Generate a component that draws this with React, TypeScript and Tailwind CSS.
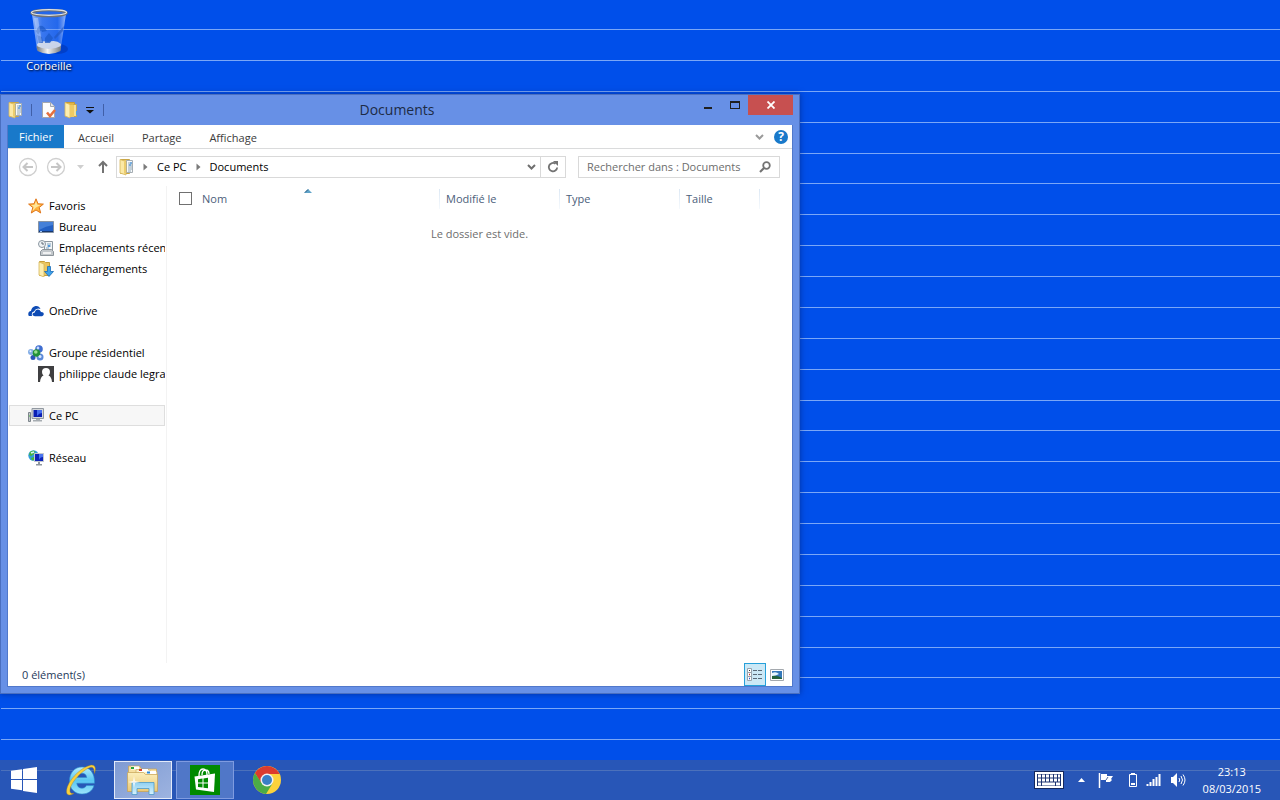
import React from "react";

type IconProps = { className?: string };

const RecycleBin = () => (
  <svg width="44" height="50" viewBox="0 0 44 50" aria-hidden="true">
    <defs>
      <linearGradient id="binGlass" x1="0" x2="1">
        <stop offset="0" stopColor="#c8dcff" stopOpacity=".75" />
        <stop offset=".3" stopColor="#7fa8f5" stopOpacity=".45" />
        <stop offset=".75" stopColor="#5a8df0" stopOpacity=".4" />
        <stop offset="1" stopColor="#d6e4ff" stopOpacity=".7" />
      </linearGradient>
      <linearGradient id="binMetal" x1="0" x2="1">
        <stop offset="0" stopColor="#6f7479" />
        <stop offset=".45" stopColor="#f4f4f4" />
        <stop offset="1" stopColor="#777c80" />
      </linearGradient>
    </defs>
    <ellipse cx="31" cy="41" rx="10" ry="5" fill="#0030a8" opacity=".5" />
    <path d="M5 6 L10 42 Q22 48 33.500 42 L39 6 Z" fill="url(#binGlass)" />
    <path d="M10 36 Q14 32 21 34 Q29 31 34 36 L33 41 Q22 46 11 41 Z" fill="#e6e8ea" opacity=".85" />
    <path d="M9.500 38 Q22 44 34 38 L33.500 43 Q22 49 10.500 43 Z" fill="url(#binMetal)" />
    <path d="M9 23 q3-8 8-4 l3 4 -5 1 -1-2 -3 5zM18 30 l4-5 4 5 -3 5 -5 0zM10 27 l5 2 1 6 -4 0z" fill="#1c59c8" opacity=".75" />
    <path d="M27 29 L37 18 L36 23 L28 31Z" fill="#1f55bd" opacity=".6" />
    <path d="M7 10 L11 35 L15 34 L11 10Z" fill="#fff" opacity=".3" />
    <ellipse cx="22" cy="5" rx="17.500" ry="3" fill="#4a7fe8" fillOpacity=".5" stroke="#6f7276" strokeWidth="2.600" />
    <ellipse cx="22" cy="4.500" rx="17.500" ry="2.800" fill="none" stroke="#dfe2e4" strokeWidth="1.200" />
  </svg>
);

const DocFolder = () => (
  <svg width="16" height="18" viewBox="0 0 16 18" aria-hidden="true" className="shrink-0">
    <path d="M1.500 1.500h9v14h-9z" fill="#eccb68" stroke="#c9a647" />
    <path d="M7.500 2.500h6v12h-6z" fill="#f7f9fa" stroke="#a5adb3" />
    <path d="M9 5h4M9 7h4M9 9h4M9 11h4M9 13h3" stroke="#8fa6b5" />
    <path d="M11 5h2M10 7h2" stroke="#2e8ae0" />
    <path d="M1 1.500l6 2V17l-6-2z" fill="#fbe9a6" stroke="#d5b65b" strokeWidth=".8" />
    <path d="M5 3.500h2V16L5 15.500z" fill="#eccd6e" />
  </svg>
);

const Folder = () => (
  <svg width="14" height="18" viewBox="0 0 14 18" aria-hidden="true">
    <path d="M1.500 1.500h9v14h-9z" fill="#e2b646" stroke="#c49a36" />
    <path d="M9.500 3.500h3v12h-3z" fill="#f6df92" stroke="#c9a03b" strokeWidth=".8" />
    <path d="M12 10h1v4h-1z" fill="#4fa3e0" />
    <path d="M1 1.500l5 2V17l-5-2z" fill="#fdeeb0" stroke="#d8b85a" strokeWidth=".8" />
    <path d="M6 4h4v12H6z" fill="#efca63" />
  </svg>
);

const PropertiesDoc = () => (
  <svg width="14" height="16" viewBox="0 0 14 16" aria-hidden="true">
    <path d="M.5.500h8l4 4v11H.5z" fill="#fdfdfd" stroke="#a3a7ae" />
    <path d="M8.500.500v4h4" fill="#e3e5e8" stroke="#a3a7ae" />
    <path d="M5 10.500l3 3.500 5-6" fill="none" stroke="#e5703f" strokeWidth="2.600" />
  </svg>
);

const Star = () => (
  <svg width="16" height="16" viewBox="0 0 16 16" aria-hidden="true">
    <path d="M8 .8l2 5 5.400.3-4.200 3.400 1.500 5.500L8 12l-4.700 3 1.500-5.500L.6 6.100 6 5.800z" fill="#ffb43c" stroke="#e0761c" strokeLinejoin="round" />
    <path d="M8 3l1.300 3.800 3.500.2L8 9.500 4.500 13l1.200-4L3 7l3.600-.2z" fill="#ffe69a" />
  </svg>
);

const DesktopIcon = () => (
  <svg width="16" height="16" viewBox="0 0 16 16" aria-hidden="true">
    <path d="M.5 2.500h15v11H.5z" fill="#2360c4" stroke="#8793a3" />
    <path d="M1 3h14v3Q8 7 1 11z" fill="#4580d8" />
    <path d="M1 12h14v1H1z" fill="#17386f" />
    <path d="M2 12.500h2" stroke="#9fc6f5" />
  </svg>
);

const RecentIcon = () => (
  <svg width="16" height="16" viewBox="0 0 16 16" aria-hidden="true">
    <path d="M6.500 1.500h8v9h-8z" fill="#f2f5f7" stroke="#8c979f" />
    <path d="M9 4h4M9 6h4M8 8h3" stroke="#7fa3bf" />
    <path d="M10 6h2" stroke="#2f87df" strokeWidth="1.500" />
    <path d="M2.500 11.500l2-2h9l2 2v4h-13z" fill="#c3c8cc" stroke="#8c949a" />
    <path d="M5 13h8" stroke="#fff" strokeWidth="1.500" />
    <circle cx="4" cy="4" r="3.500" fill="#eef2f5" stroke="#8a96a0" />
    <path d="M4 2v2h2" fill="none" stroke="#5f6b76" />
  </svg>
);

const DownloadFolder = () => (
  <svg width="16" height="16" viewBox="0 0 16 16" aria-hidden="true">
    <path d="M1.500.500h5l1 1h4v13h-10z" fill="#ecc65e" stroke="#c79e3a" />
    <path d="M1 1l5 2v13l-5-2z" fill="#fdeeb0" stroke="#d5b65b" strokeWidth=".8" />
    <path d="M9.500 5.500h3v5h3l-4.500 5-4.500-5h3z" fill="#3fa2ea" stroke="#1b6cb8" strokeWidth=".8" />
  </svg>
);

const OneDriveIcon = () => (
  <svg width="16" height="16" viewBox="0 0 16 16" aria-hidden="true">
    <path d="M.5 12.500Q-.5 8.500 3 8Q3.500 4 7.500 3Q11 2.500 12.500 6Q8 4.500 6 8.500Q3 9 4 13H2Q.8 13 .5 12.500z" fill="#0e4bb5" />
    <path d="M6 13Q4.200 12.500 4.500 11Q5 9.500 6.800 9.500Q7.300 6.500 10 6.500Q12.300 6.500 13 9Q15.800 9 15.800 11.300Q15.500 13 14 13.200H7z" fill="#0e4bb5" />
  </svg>
);

const HomeGroupIcon = () => (
  <svg width="16" height="16" viewBox="0 0 16 16" aria-hidden="true">
    <circle cx="11" cy="4" r="3.800" fill="#3f6dd0" />
    <circle cx="3" cy="7" r="3" fill="#84aee6" />
    <circle cx="12" cy="12" r="3.500" fill="#5c8ad8" />
    <circle cx="5" cy="12.500" r="2.500" fill="#2b55b8" />
    <circle cx="8.500" cy="8" r="3.800" fill="#23913a" />
    <circle cx="7.800" cy="7" r="1.800" fill="#9be08f" />
    <circle cx="10" cy="3" r="1.400" fill="#c5dbff" />
    <circle cx="12" cy="11.500" r="1.500" fill="#d8e6ff" />
    <circle cx="2.500" cy="6.300" r="1" fill="#e7f1ff" />
  </svg>
);

const UserIcon = () => (
  <svg width="16" height="16" viewBox="0 0 16 16" aria-hidden="true">
    <path d="M0 0h16v16H0z" fill="#3f3f41" />
    <path d="M8 2q4 0 4 4 0 2-1.500 3.500 3 1 3.500 6.500H2q.5-5.500 3.500-6.500Q4 8 4 6 4 2 8 2z" fill="#fff" />
  </svg>
);

const PcIcon = () => (
  <svg width="16" height="16" viewBox="0 0 16 16" aria-hidden="true">
    <path d="M.5 4.500h2v9h-2z" fill="#c3c8cc" stroke="#7d858b" />
    <path d="M1 8h1" stroke="#4bb840" />
    <path d="M4 .500h11.500v10H4z" fill="#d4d7da" stroke="#9198a0" />
    <path d="M5.500 2H14v7H5.500z" fill="#0b1fb4" />
    <path d="M9 2h5v3Q11 5 9 8z" fill="#466df0" />
    <path d="M8 11h4v1h2v1.500H5V12h3z" fill="#a7adb2" />
  </svg>
);

const NetworkIcon = () => (
  <svg width="16" height="16" viewBox="0 0 16 16" aria-hidden="true">
    <circle cx="5.500" cy="5.500" r="5.200" fill="#2f9dde" />
    <path d="M2 2q3-2 5-1L6 4 3 6 1 5zM3 8l3-1 1 3-3 .5z" fill="#49b53c" />
    <path d="M3 3l3-1" stroke="#d7f3ff" strokeWidth="1.500" />
    <path d="M6.500 3.500h9v8h-9z" fill="#0d24ba" stroke="#c3c8ce" />
    <path d="M11 4h4v3q-3 0-4 3z" fill="#4a74ef" />
    <path d="M10 12h2v2h2v1.500H8V14h2z" fill="#8e969d" />
  </svg>
);

const DetailsView = () => (
  <svg width="16" height="14" viewBox="0 0 16 14" aria-hidden="true">
    <path d="M.5.500h4v4h-4zM.5 4.500h4v4h-4zM.5 8.500h4v4h-4z" fill="#fff" stroke="#98a3ad" />
    <path d="M2 2.500h1" stroke="#333" />
    <path d="M2 6.500h1" stroke="#d3302a" strokeWidth="1.500" />
    <path d="M2 10.500h1" stroke="#2e5ccb" strokeWidth="1.500" />
    <path d="M6 2.500h4M11 2.500h4M6 6.500h4M11 6.500h4M6 10.500h4M11 10.500h4" stroke="#596a78" />
  </svg>
);

const ThumbView = () => (
  <svg width="14" height="12" viewBox="0 0 14 12" aria-hidden="true">
    <path d="M.5.500h13v11H.5z" fill="#fff" stroke="#a4a9ae" />
    <path d="M2 2h10v8H2z" fill="#3578ba" />
    <path d="M2 4q4-2 7 1l-7 3z" fill="#e6f6ff" />
    <path d="M2 7q5-1 10 2v1H2z" fill="#22633b" />
  </svg>
);

const WindowsLogo = () => (
  <svg width="26" height="26" viewBox="0 0 26 26" aria-hidden="true">
    <path d="M0 3.800l11-1.600V12H0zM12 2L26 0v12H12zM0 13h11v10.300L0 21.800zM12 13h14v13l-14-2z" fill="#fff" />
  </svg>
);

const IeLogo = () => (
  <svg width="32" height="32" viewBox="0 0 32 32" aria-hidden="true">
    <defs>
      <linearGradient id="ieBlue" x1="0" y1="0" x2="0" y2="1">
        <stop offset="0" stopColor="#b4ecfd" />
        <stop offset=".5" stopColor="#59c6f3" />
        <stop offset="1" stopColor="#9be4fa" />
      </linearGradient>
    </defs>
    <path
      d="M17 3C9.500 3 4.500 9 4.500 17c0 7.500 5 13 12.500 13 6 0 10.500-3 12-8.500h-7.500c-1 1.800-2.400 2.700-4.500 2.700-3 0-5-2-5.200-5h17.700C30 9.500 25 3 17 3zM12 13.500c.5-2.700 2.300-4.200 5-4.200s4.400 1.500 4.700 4.200z"
      fill="url(#ieBlue)"
      stroke="#2b8fd0"
      strokeWidth=".6"
    />
    <path
      d="M29.500 9.500C31.500 4 30 .500 25.500 1.200 18 2.500 6 13 2.500 22.500 1 27 1 31 4.500 31c1.500 0 3-.7 4.500-1.700-3 .8-4.500-.5-4-3.800C6 18 17.500 6 25 3.500c3-.8 4.500 1 4.500 6z"
      fill="#f9d13d"
      stroke="#a8801c"
      strokeWidth=".4"
    />
  </svg>
);

const ExplorerLogo = () => (
  <svg width="34" height="32" viewBox="0 0 34 32" aria-hidden="true">
    <defs>
      <linearGradient id="tray" x1="0" y1="0" x2="0" y2="1">
        <stop offset="0" stopColor="#8fd0f2" />
        <stop offset="1" stopColor="#d8f2fc" />
      </linearGradient>
      <linearGradient id="folderFront" x1="0" y1="0" x2="0" y2="1">
        <stop offset="0" stopColor="#fbeebb" />
        <stop offset="1" stopColor="#ecc976" />
      </linearGradient>
    </defs>
    <path d="M2.500 2h11l2 3h15v22h-28z" fill="#f6dfa0" stroke="#c6a254" strokeWidth=".7" />
    <path d="M5 2.500h8v3H5z" fill="#fff" />
    <path d="M5 4h3" stroke="#26a33c" strokeWidth="2" />
    <path d="M10 5.500h13l2 2h6v6H10z" fill="#fbeec2" stroke="#cfae63" strokeWidth=".7" />
    <path d="M13 5h9v3h-9z" fill="#fff" />
    <path d="M13 6h3" stroke="#d6402c" strokeWidth="2" />
    <path d="M21 7h9v3h-9z" fill="#fff" />
    <path d="M21 8.500h3" stroke="#2a86d8" strokeWidth="2" />
    <path d="M1.500 8.500h16l2 2h12v17h-30z" fill="url(#folderFront)" stroke="#c6a254" strokeWidth=".7" />
    <path d="M6 18.500h22v12h-5v-6H11v6H6z" fill="url(#tray)" stroke="#4c9bc9" strokeWidth=".8" />
    <path d="M8 12l1 5 5 1-5 1-1 5-1-5-5-1 5-1z" fill="#fff" opacity=".8" />
  </svg>
);

const StoreLogo = () => (
  <svg width="30" height="30" viewBox="0 0 30 30" aria-hidden="true">
    <path d="M0 0h30v30H0z" fill="#008a00" />
    <path d="M9 11Q9 4 13 4t4 6M12 10Q12 5 15.500 5T19 9" fill="none" stroke="#fff" strokeWidth="1.300" />
    <path d="M4.500 11.500L25 8.500l-1 18.500L6 24.500z" fill="#fff" />
    <path d="M8 14.200l4.500-.6v4H8zM13.500 13.500l4.500-.7v4.800h-4.500zM8 18.600h4.500v4l-4.500-.6zM13.500 18.600H18v4.700l-4.500-.6z" fill="#008a00" />
  </svg>
);

const ChromeLogo = () => (
  <svg width="28" height="28" viewBox="0 0 28 28" aria-hidden="true">
    <circle cx="14" cy="14" r="14" fill="#fbd23c" />
    <path d="M1.900 7A14 14 0 0 1 26.100 7L26.500 8H14L8 17z" fill="#dc3b2e" />
    <path d="M1.900 7A14 14 0 0 0 13 28L19.500 17.500 8.500 17z" fill="#4bac47" />
    <circle cx="14" cy="14" r="6.500" fill="#f2f2f2" />
    <circle cx="14" cy="14" r="5" fill="#3a7fc6" />
  </svg>
);

const KeyboardIcon = () => (
  <svg width="30" height="18" viewBox="0 0 30 18" aria-hidden="true">
    <path d="M0 0h30v18H0z" fill="#14275c" />
    <path d="M1 1h28v16H1z" fill="#fff" />
    <path d="M3 3h24v12H3z" fill="#1c3370" />
    <path d="M4 5h22M4 9h22" stroke="#fff" strokeWidth="3" strokeDasharray="3 1" />
    <path d="M4 13h3M8 13h13M22 13h4" stroke="#fff" strokeWidth="3" />
  </svg>
);

const FlagIcon = () => (
  <svg width="16" height="16" viewBox="0 0 16 16" aria-hidden="true">
    <path d="M1.500 1v15" stroke="#fff" strokeWidth="1.500" />
    <path d="M3 2h6v2h6l-2 3 1 1-2 2H8V8H3z" fill="#fff" />
    <path d="M8 8l2-3" stroke="#24407f" strokeWidth=".8" />
  </svg>
);

const BatteryIcon = () => (
  <svg width="10" height="16" viewBox="0 0 10 16" aria-hidden="true">
    <path d="M3 1h4v2H3z" fill="#fff" />
    <path d="M1.500 2.500h7v12h-7z" fill="#2857b7" stroke="#fff" />
    <path d="M3 11h4v2H3z" fill="#fff" />
  </svg>
);

const SignalIcon = () => (
  <svg width="16" height="12" viewBox="0 0 16 12" aria-hidden="true">
    <path d="M1.500 10v2M4.500 8v4M7.500 5v7M10.500 3v9M13.500 0v12" stroke="#fff" strokeWidth="2" />
  </svg>
);

const SpeakerIcon = () => (
  <svg width="16" height="14" viewBox="0 0 16 14" aria-hidden="true">
    <path d="M1 4h2l4-4v14l-4-4H1z" fill="#fff" />
    <path d="M9 5q1.500 2 0 4M11 3q3 4 0 8M13 1.500q4 5.500 0 11" fill="none" stroke="#fff" />
  </svg>
);

const Chevron = ({ className }: IconProps) => (
  <svg width="9" height="6" viewBox="0 0 9 6" aria-hidden="true" className={className}>
    <path d="M1 1l3.500 3.500L8 1" fill="none" stroke="currentColor" strokeWidth="2" />
  </svg>
);

const Crumb = () => (
  <svg width="5" height="8" viewBox="0 0 5 8" aria-hidden="true" className="shrink-0">
    <path d="M.5.500v7L4.500 4z" fill="#7a7a7a" />
  </svg>
);

const CircleArrow = ({ className }: IconProps) => (
  <svg width="20" height="20" viewBox="0 0 20 20" aria-hidden="true" className={className}>
    <circle cx="10" cy="10" r="8.500" fill="none" stroke="#cfcfcf" strokeWidth="1.300" />
    <path d="M15 10H6M9.500 6L5.500 10l4 4" fill="none" stroke="#c6c6c6" strokeWidth="2" />
  </svg>
);

const navGroups = [
  {
    label: "Favoris",
    icon: <Star />,
    items: [
      { label: "Bureau", icon: <DesktopIcon /> },
      { label: "Emplacements récents", icon: <RecentIcon /> },
      { label: "Téléchargements", icon: <DownloadFolder /> },
    ],
  },
  { label: "OneDrive", icon: <OneDriveIcon />, items: [] },
  {
    label: "Groupe résidentiel",
    icon: <HomeGroupIcon />,
    items: [{ label: "philippe claude legrand", icon: <UserIcon /> }],
  },
  { label: "Ce PC", icon: <PcIcon />, items: [], selected: true },
  { label: "Réseau", icon: <NetworkIcon />, items: [] },
];

const columns = [
  { label: "Modifié le", width: "w-[120px]" },
  { label: "Type", width: "w-[120px]" },
  { label: "Taille", width: "w-[80px]" },
];

const Wallpaper = () => (
  <div className="absolute inset-0 flex flex-col justify-between pt-[29px] pb-[29px] pl-px">
    {Array.from({ length: 25 }, (_, i) => (
      <div key={i} className="h-px bg-[#7aa7f7]" />
    ))}
  </div>
);

const TitleBar = () => (
  <header className="flex h-[30px] items-center pl-[7px]">
    <div className="flex items-center">
      <DocFolder />
      <span className="ml-[7px] h-3 w-px bg-[#405fa8]" />
      <button aria-label="Propriétés" className="ml-[10px]">
        <PropertiesDoc />
      </button>
      <button aria-label="Nouveau dossier" className="ml-2">
        <Folder />
      </button>
      <button aria-label="Personnaliser" className="ml-2">
        <svg width="8" height="8" viewBox="0 0 8 8" aria-hidden="true">
          <path d="M0 1h8v1H0zM0 4h8L4 7.500z" fill="#111" />
        </svg>
      </button>
      <span className="ml-[9px] h-3 w-px bg-[#405fa8]" />
    </div>
    <h1 className="flex-1 pr-1 text-center text-[14px] leading-5 text-[#1d2b45]">Documents</h1>
    <div className="flex self-start pr-[6px]">
      <button aria-label="Réduire" className="flex h-5 w-[27px] items-center justify-center">
        <span className="mt-[6px] h-[2px] w-2 bg-[#1f1f1f]" />
      </button>
      <button aria-label="Agrandir" className="flex h-5 w-[27px] items-center justify-center">
        <span className="h-2 w-[10px] border border-t-2 border-[#1f1f1f]" />
      </button>
      <button aria-label="Fermer" className="flex h-5 w-[45px] items-center justify-center bg-[#c75050]">
        <svg width="8" height="8" viewBox="0 0 8 8" aria-hidden="true">
          <path d="M.5.500l7 7M7.500.500l-7 7" stroke="#fff" strokeWidth="1.800" />
        </svg>
      </button>
    </div>
  </header>
);

const Ribbon = () => (
  <nav className="flex h-6 border-b border-[#dadbdc]">
    <button className="w-14 bg-[#1979ca] text-white">Fichier</button>
    {["Accueil", "Partage", "Affichage"].map((tab) => (
      <button key={tab} className="px-[14px] pt-[2px] text-[#3b3b3b]">
        {tab}
      </button>
    ))}
    <div className="ml-auto flex items-center gap-[10px] pr-1">
      <button aria-label="Développer le ruban" className="text-[#9a9a9a]">
        <Chevron />
      </button>
      <button aria-label="Aide" className="flex size-[14px] items-center justify-center rounded-full bg-[#1979ca] text-[12px] font-bold text-white">
        ?
      </button>
    </div>
  </nav>
);

const AddressBar = () => (
  <div className="flex items-center pt-[7px] pr-3 pb-2 pl-[10px]">
    <button aria-label="Précédent">
      <CircleArrow />
    </button>
    <button aria-label="Suivant" className="ml-2">
      <CircleArrow className="rotate-180" />
    </button>
    <button aria-label="Emplacements" className="ml-[11px]">
      <svg width="7" height="4" viewBox="0 0 7 4" aria-hidden="true">
        <path d="M0 0h7L3.500 4z" fill="#cfcfcf" />
      </svg>
    </button>
    <button aria-label="Dossier parent" className="ml-[13px]">
      <svg width="12" height="14" viewBox="0 0 12 14" aria-hidden="true">
        <path d="M6 13V2M2 6l4-4 4 4" fill="none" stroke="#737373" strokeWidth="2" />
      </svg>
    </button>
    <div className="ml-[7px] flex h-[22px] min-w-0 flex-1 items-center border border-[#d9d9d9] pl-[2px]">
      <DocFolder />
      <span className="ml-2 flex items-center gap-[9px]">
        <Crumb />
        <button>Ce PC</button>
        <Crumb />
        <button>Documents</button>
      </span>
      <button aria-label="Historique" className="mr-1 ml-auto text-[#6f6f6f]">
        <Chevron />
      </button>
      <button aria-label="Actualiser" className="flex h-full w-[25px] items-center justify-center border-l border-[#d9d9d9]">
        <svg width="12" height="12" viewBox="0 0 12 12" aria-hidden="true">
          <path d="M8.500 2.700A4.200 4.200 0 1 0 10.200 6.500" fill="none" stroke="#737373" strokeWidth="1.800" />
          <path d="M6 0h5v5z" fill="#737373" />
        </svg>
      </button>
    </div>
    <label className="ml-3 flex h-[22px] w-[202px] items-center border border-[#d9d9d9] pr-2 pl-2">
      <input
        type="search"
        aria-label="Rechercher"
        placeholder="Rechercher dans : Documents"
        className="min-w-0 flex-1 outline-none placeholder:text-[#6d6d6d]"
      />
      <svg width="12" height="12" viewBox="0 0 12 12" aria-hidden="true" className="shrink-0">
        <circle cx="7.500" cy="4.500" r="3.300" fill="none" stroke="#737373" strokeWidth="1.800" />
        <path d="M5 7L1 11" stroke="#737373" strokeWidth="2.200" />
      </svg>
    </label>
  </div>
);

const Sidebar = () => (
  <nav className="flex w-[159px] shrink-0 flex-col gap-[21px] overflow-hidden border-r border-[#f3f3f3] pt-[9px] pr-px pl-px">
    {navGroups.map((group) => (
      <div key={group.label}>
        <a
          href="#"
          className={
            group.selected
              ? "flex h-[21px] items-center gap-[5px] border border-[#dedede] bg-[#f7f7f7] pl-[18px]"
              : "flex h-[21px] items-center gap-[5px] pl-[19px]"
          }
        >
          {group.icon}
          {group.label}
        </a>
        {group.items.map((item) => (
          <a key={item.label} href="#" className="flex h-[21px] items-center gap-[5px] overflow-hidden pl-[29px] whitespace-nowrap">
            <span className="shrink-0">{item.icon}</span>
            {item.label}
          </a>
        ))}
      </div>
    ))}
  </nav>
);

const Divider = () => <span className="h-5 w-px bg-linear-to-b from-[#dce8f4] to-[#f5f9fd]" />;

const FileList = () => (
  <div className="min-w-0 flex-1">
    <table className="w-full table-fixed border-collapse">
      <thead>
        <tr className="h-[25px] text-left text-[#4c607a]">
          <th className="p-0 font-normal">
            <div className="relative flex items-center pl-3">
              <input
                type="checkbox"
                aria-label="Tout sélectionner"
                className="size-[13px] appearance-none border border-[#707070] bg-white"
              />
              <span className="ml-[10px] flex-1">Nom</span>
              <Divider />
              <svg width="8" height="4" viewBox="0 0 8 4" aria-hidden="true" className="absolute top-0 left-1/2">
                <path d="M0 4L4 0l4 4z" fill="#5fa3c9" />
                <path d="M1 3.500L4 .500" stroke="#2f5f82" />
              </svg>
            </div>
          </th>
          {columns.map((column) => (
            <th key={column.label} className={`${column.width} p-0 font-normal`}>
              <div className="flex items-center pl-[6px]">
                <span className="flex-1">{column.label}</span>
                <Divider />
              </div>
            </th>
          ))}
          <td className="w-8 p-0" />
        </tr>
      </thead>
      <tbody>
        <tr>
          <td colSpan={5} className="pt-[15px] text-center text-[#6d6d6d]">
            Le dossier est vide.
          </td>
        </tr>
      </tbody>
    </table>
  </div>
);

const StatusBar = () => (
  <footer className="flex h-[23px] items-center pl-[14px] text-[#1e395b]">
    <span>0 élément(s)</span>
    <div className="ml-auto flex items-center gap-1 pr-2">
      <button aria-label="Détails" className="flex h-[23px] w-[22px] items-center justify-center border border-[#26a0da] bg-[#cbe8f6]">
        <DetailsView />
      </button>
      <button aria-label="Miniatures">
        <ThumbView />
      </button>
    </div>
  </footer>
);

const ExplorerWindow = () => (
  <section className="absolute top-[94px] bottom-[106px] left-0 flex w-5/8 min-w-[640px] flex-col border border-[#4a6fc0] bg-[#6790e6] text-[11px] leading-4 text-black shadow-[0_0_6px_rgba(0,20,90,0.5)]">
    <TitleBar />
    <div className="mx-[6px] mb-[6px] flex min-h-0 flex-1 flex-col border border-t-0 border-[#5078cb] bg-white">
      <Ribbon />
      <AddressBar />
      <div className="flex min-h-0 flex-1">
        <Sidebar />
        <FileList />
      </div>
      <StatusBar />
    </div>
  </section>
);

const pinnedApps = [
  { label: "Internet Explorer", icon: <IeLogo />, style: "" },
  { label: "Explorateur de fichiers", icon: <ExplorerLogo />, style: "border border-[#e3eafa] bg-linear-to-br from-[#7f9bd3] to-[#9db3e0]" },
  { label: "Windows Store", icon: <StoreLogo />, style: "border border-[#7f9be0] bg-[#5077c8]" },
  { label: "Google Chrome", icon: <ChromeLogo />, style: "" },
];

const Taskbar = () => (
  <footer className="absolute inset-x-0 bottom-0 flex h-10 items-center gap-1 bg-[#395aa1]/70">
    <button aria-label="Démarrer" className="flex h-full w-12 items-center justify-center">
      <WindowsLogo />
    </button>
    {pinnedApps.map((app) => (
      <button key={app.label} aria-label={app.label} className={`flex h-[38px] w-[58px] items-center justify-center ${app.style}`}>
        {app.icon}
      </button>
    ))}
    <div className="ml-auto flex items-center pr-[19px] text-white">
      <button aria-label="Clavier tactile">
        <KeyboardIcon />
      </button>
      <button aria-label="Icônes cachées" className="ml-[14px]">
        <svg width="7" height="4" viewBox="0 0 7 4" aria-hidden="true">
          <path d="M0 4L3.500 0 7 4z" fill="#fff" />
        </svg>
      </button>
      <button aria-label="Centre de maintenance" className="ml-[13px]">
        <FlagIcon />
      </button>
      <button aria-label="Batterie" className="ml-[14px]">
        <BatteryIcon />
      </button>
      <button aria-label="Réseau" className="ml-2">
        <SignalIcon />
      </button>
      <button aria-label="Volume" className="ml-2">
        <SpeakerIcon />
      </button>
      <time className="ml-[17px] text-center text-[11px] leading-[17px]">
        23:13
        <br />
        08/03/2015
      </time>
    </div>
  </footer>
);

export default function App() {
  return (
    <main className="relative h-screen overflow-hidden bg-[#004fea] font-['Segoe_UI','Open_Sans',sans-serif]">
      <Wallpaper />
      <a href="#" className="relative flex w-[98px] flex-col items-center pt-2 text-[11px] leading-4 text-white [text-shadow:1px_1px_2px_#000]">
        <RecycleBin />
        <span>Corbeille</span>
      </a>
      <ExplorerWindow />
      <Taskbar />
    </main>
  );
}
